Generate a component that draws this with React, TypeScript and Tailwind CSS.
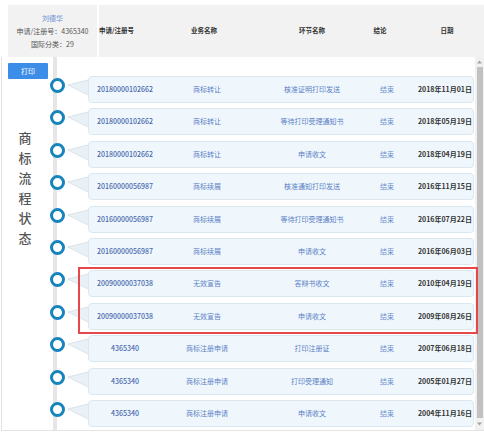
import React from "react";

type Row = { no: string; biz: string; step: string; res: string; date: string };

const rows: Row[] = [
  { no: "20180000102662", biz: "商标转让", step: "核准证明打印发送", res: "结束", date: "2018年11月01日" },
  { no: "20180000102662", biz: "商标转让", step: "等待打印受理通知书", res: "结束", date: "2018年05月19日" },
  { no: "20180000102662", biz: "商标转让", step: "申请收文", res: "结束", date: "2018年04月19日" },
  { no: "20160000056987", biz: "商标续展", step: "核准通知打印发送", res: "结束", date: "2016年11月15日" },
  { no: "20160000056987", biz: "商标续展", step: "等待打印受理通知书", res: "结束", date: "2016年07月22日" },
  { no: "20160000056987", biz: "商标续展", step: "申请收文", res: "结束", date: "2016年06月03日" },
  { no: "20090000037038", biz: "无效宣告", step: "答辩书收文", res: "结束", date: "2010年04月19日" },
  { no: "20090000037038", biz: "无效宣告", step: "申请收文", res: "结束", date: "2009年08月26日" },
  { no: "4365340", biz: "商标注册申请", step: "打印注册证", res: "结束", date: "2007年06月18日" },
  { no: "4365340", biz: "商标注册申请", step: "打印受理通知", res: "结束", date: "2005年01月27日" },
  { no: "4365340", biz: "商标注册申请", step: "申请收文", res: "结束", date: "2004年11月16日" },
];

const font = { fontFamily: '"Noto Sans CJK SC", "Noto Sans", sans-serif' };

function TimelineRow({ r }: { r: Row }) {
  return (
    <div className="flex h-[32.4px] items-start">
      <div className="w-[17px] h-[27px] flex items-start">
        <div className="mt-[2px] ml-[1px] w-[15px] h-[15px] rounded-full border-[3px] border-[#1784bc] bg-white" />
      </div>
      <svg width="22" height="27" viewBox="0 0 22 27" className="block">
        <polygon points="2,9 22,4 22,19" fill="#eaf1f6" />
        <polyline points="22,4 2,9 22,19" fill="none" stroke="#d9e3ea" strokeWidth="1" />
      </svg>
      <div className="w-[386px] h-[27px] rounded-[4px] border border-[#dbe7ef] bg-[#eff7fc] flex items-center text-[7px] leading-none whitespace-nowrap">
        <div className="w-[72px] text-center text-[#4a68ae] font-medium">{r.no}</div>
        <div className="w-[92px] text-center text-[#5b7fc6]">{r.biz}</div>
        <div className="w-[118px] text-center text-[#5b7fc6]">{r.step}</div>
        <div className="w-[32px] text-center text-[#6b8fcf]">{r.res}</div>
        <div className="flex-1 text-right pr-[1px] text-[#333] font-bold">{r.date}</div>
      </div>
    </div>
  );
}

export default function App() {
  return (
    <div className="relative w-[484px] h-[432px] bg-white overflow-hidden" style={font}>
      {/* header */}
      <div className="flex mt-[5px] ml-[8px] h-[52px]">
        <div className="w-[89px] bg-[#f2f2f2] flex flex-col items-center justify-center text-[7px] leading-[13px] text-[#555] whitespace-nowrap">
          <div className="text-[#6a8fd4]">刘德华</div>
          <div>申请/注册号：4365340</div>
          <div>国际分类：29</div>
        </div>
        <div className="w-[2px]" />
        <div className="flex-1 bg-[#f2f2f2] flex items-center text-[6.5px] font-bold text-[#333] whitespace-nowrap">
          <div className="w-[30px] text-center">申请/注册号</div>
          <div className="w-[150px] text-center">业务名称</div>
          <div className="w-[66px] text-center">环节名称</div>
          <div className="w-[70px] text-center">结论</div>
          <div className="w-[64px] text-center">日期</div>
        </div>
      </div>

      {/* body */}
      <div className="ml-[1px] w-[483px] h-[374px] border-l border-b border-[#e3e3e3] flex">
        <div className="w-[47px] flex flex-col items-start">
          <div className="mt-[6px] ml-[6px] w-[40px] h-[16px] bg-[#3c8de8] text-white text-[7px] flex items-center justify-center rounded-[1px]">
            打印
          </div>
          <div className="mt-[49px] w-[46px] flex flex-col items-center text-[13px] leading-[20px] font-medium text-[#555]">
            {"商标流程状态".split("").map((c, i) => (
              <div key={i}>{c}</div>
            ))}
          </div>
        </div>
        <div className="w-[426px] pt-[19px] bg-[linear-gradient(to_right,transparent_4px,#e6e6e6_4px,#e6e6e6_8px,transparent_8px)]">
          {rows.map((r, i) => (
            <TimelineRow key={i} r={r} />
          ))}
        </div>
        <div className="w-[9px] bg-[#f1f1f1] flex flex-col items-center">
          <svg width="5" height="4" viewBox="0 0 5 4" className="mt-[3px]">
            <polygon points="2.5,0.5 5,3.5 0,3.5" fill="#a3a3a3" />
          </svg>
          <div className="mt-[3px] w-[6px] h-[351px] bg-[#c1c1c1]" />
          <svg width="5" height="4" viewBox="0 0 5 4" className="mt-[4px]">
            <polygon points="0,0.5 5,0.5 2.5,3.5" fill="#a3a3a3" />
          </svg>
        </div>
      </div>

      {/* annotation */}
      <div className="absolute left-[78px] top-[267px] w-[400px] h-[67px] border-2 border-[#e5484a]" />
    </div>
  );
}
